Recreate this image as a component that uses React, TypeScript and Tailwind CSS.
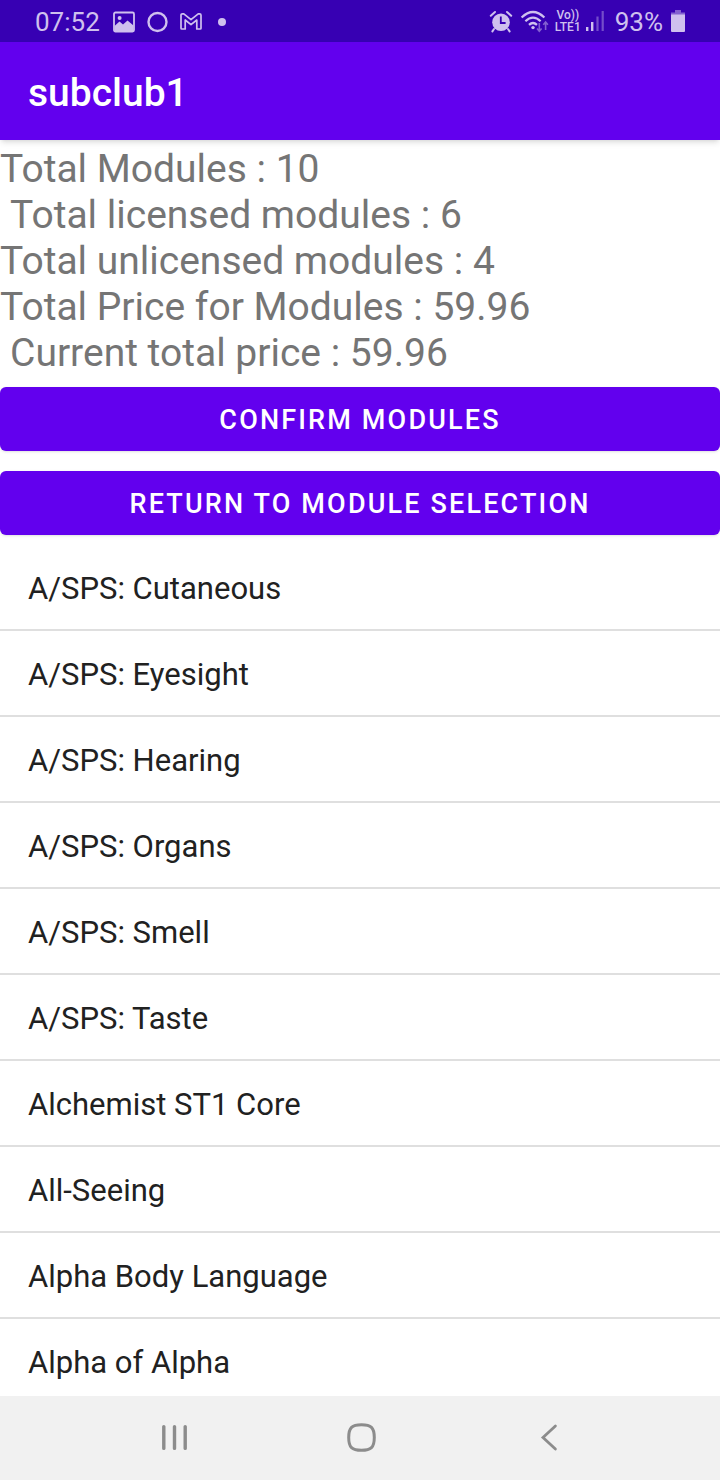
const TOTALS = [
  { label: "Total Modules", value: "10" },
  { label: "Total licensed modules", value: "6", indent: true },
  { label: "Total unlicensed modules", value: "4" },
  { label: "Total Price for Modules", value: "59.96" },
  { label: "Current total price", value: "59.96", indent: true },
];

const ACTIONS = ["Confirm Modules", "Return to Module Selection"];

const MODULES = [
  "A/SPS: Cutaneous",
  "A/SPS: Eyesight",
  "A/SPS: Hearing",
  "A/SPS: Organs",
  "A/SPS: Smell",
  "A/SPS: Taste",
  "Alchemist ST1 Core",
  "All-Seeing",
  "Alpha Body Language",
  "Alpha of Alpha",
];

function StatusBar() {
  return (
    <div className="flex h-[42px] shrink-0 items-center justify-between bg-[#3700b3] px-[35px] pt-0.5 text-[#cfc0ee]">
      <div className="flex items-center gap-3">
        <span className="text-[26px] leading-8">07:52</span>
        <svg className="ml-px" width="22" height="22" viewBox="0 0 22 22" aria-hidden="true">
          <rect x="1" y="1.5" width="20" height="19" rx="1.5" fill="none" stroke="currentColor" strokeWidth="1.8" />
          <circle cx="6.6" cy="7" r="2" fill="currentColor" />
          <path d="M1.5 15 6.5 10.5 10 13.5 14.5 9.5 20.5 14.5V20.5H1.5Z" fill="currentColor" />
        </svg>
        <svg width="21" height="22" viewBox="0 0 21 22" aria-hidden="true">
          <circle cx="10.5" cy="11" r="9" fill="none" stroke="currentColor" strokeWidth="2.4" />
        </svg>
        <svg width="22" height="22" viewBox="0 0 22 22" aria-hidden="true">
          <path
            d="M1 4.2Q1 2.8 2.4 2.8H3.8L11 8.6 18.2 2.8H19.6Q21 2.8 21 4.2V17.2Q21 18 20.2 18H16.8V9L11 13.6 5.2 9V18H1.8Q1 18 1 17.2Z"
            fill="none"
            stroke="currentColor"
            strokeWidth="1.7"
            strokeLinejoin="round"
          />
        </svg>
        <span className="ml-1 size-2 rounded-full bg-current" />
      </div>

      <div className="flex items-center gap-[5px]">
        <div className="flex items-center gap-[7px]">
          <svg width="24" height="24" viewBox="0 0 24 24" aria-hidden="true">
            <circle cx="12" cy="12.2" r="8.8" fill="currentColor" />
            <path d="M1.8 5.8 6 2M22.2 5.8 18 2M5 19 3.4 21.4M19 19 20.6 21.4" stroke="currentColor" strokeWidth="2" strokeLinecap="round" />
            <path d="M11.8 6.6V13H16.6" fill="none" stroke="#3700b3" strokeWidth="1.8" />
          </svg>
          <svg width="30" height="24" viewBox="0 0 30 24" aria-hidden="true">
            <g fill="none" stroke="currentColor" strokeWidth="2.2">
              <path d="M1.6 7.5Q13 -3.5 24.4 7.5" />
              <path d="M5.4 11.3Q13 3.9 20.6 11.3" />
              <path d="M9 14.9Q13 11.1 17 14.9" />
            </g>
            <circle cx="13" cy="17.6" r="1.7" fill="currentColor" />
            <path
              d="M19.3 13V21M17 18.5 19.3 21.2 21.6 18.5M25.6 20V12M23.3 14.7 25.6 12 27.9 14.7"
              fill="none"
              stroke="currentColor"
              strokeWidth="1.6"
              opacity=".5"
            />
          </svg>
        </div>
        <div className="flex flex-col items-center pb-0.5 text-xs leading-3 font-medium">
          <span>Vo))</span>
          <span>LTE1</span>
        </div>
        <svg width="18" height="22" viewBox="0 0 18 22" fill="currentColor" aria-hidden="true">
          <rect x="0" y="16" width="2.4" height="4" />
          <rect x="5" y="11" width="2.4" height="9" />
          <rect x="10.4" y="5.5" width="2.2" height="14.5" opacity=".4" />
          <rect x="15.6" y="0" width="2.2" height="20" opacity=".4" />
        </svg>
        <span className="ml-1.5 text-[26px] leading-8">93%</span>
        <svg className="ml-[3px]" width="14" height="24" viewBox="0 0 14 24" fill="currentColor" aria-hidden="true">
          <path d="M4 0H10V2.4H14V5H0V2.4H4Z" opacity=".5" />
          <path d="M0 4.5H14V21Q14 22 13 22H1Q0 22 0 21Z" />
        </svg>
      </div>
    </div>
  );
}

function NavigationBar() {
  return (
    <nav className="flex h-[84px] shrink-0 items-center justify-center gap-[156px] bg-[#f1f1f1] pl-0.5 text-[#8c8c8c]">
      <button type="button" aria-label="Recent apps">
        <svg width="32" height="32" viewBox="0 0 32 32" fill="none" stroke="currentColor" strokeWidth="3.4" strokeLinecap="round">
          <path d="M6.8 4.6V26.4M17.5 4.6V26.4M28.2 4.6V26.4" />
        </svg>
      </button>
      <button type="button" aria-label="Home">
        <svg width="32" height="32" viewBox="0 0 32 32" fill="none" stroke="currentColor" strokeWidth="3">
          <path d="M16.5 2.7C26 2.7 29.3 5.5 29.3 15.5S26 28.3 16.5 28.3 3.7 25.5 3.7 15.5 7 2.7 16.5 2.7Z" />
        </svg>
      </button>
      <button type="button" aria-label="Back">
        <svg width="32" height="32" viewBox="0 0 32 32" fill="none" stroke="currentColor" strokeWidth="2.8" strokeLinecap="round">
          <path d="M22.4 4 10 15.5 22.4 27" />
        </svg>
      </button>
    </nav>
  );
}

export default function App() {
  return (
    <div className="flex h-screen flex-col bg-white font-[Roboto,sans-serif]">
      <StatusBar />
      <header className="relative flex h-[98px] shrink-0 items-center bg-[#6200ee] px-7 pt-1 shadow-md shadow-black/10">
        <h1 className="text-[39px] leading-[46px] font-medium text-white">subclub1</h1>
      </header>

      <main className="flex min-h-0 flex-1 flex-col overflow-hidden">
        <section className="pt-1.5 text-[39px] leading-[46px] text-[#757575]">
          {TOTALS.map((row) => (
            <p key={row.label} className={row.indent ? "pl-2.5" : ""}>
              {row.label} : {row.value}
            </p>
          ))}
        </section>

        <div className="mt-[11px] flex flex-col gap-5">
          {ACTIONS.map((label) => (
            <button
              key={label}
              type="button"
              className="h-16 w-full rounded-md bg-[#6200ee] pt-0.5 text-[27px] leading-8 font-medium tracking-[0.08em] text-white uppercase shadow-sm"
            >
              {label}
            </button>
          ))}
        </div>

        <ul className="mt-2.5 divide-y-2 divide-[#dfdfdf] text-[31px] leading-9 text-[#212121]">
          {MODULES.map((name) => (
            <li key={name} className="px-7 pt-[26px] pb-[22px]">
              {name}
            </li>
          ))}
        </ul>
      </main>

      <NavigationBar />
    </div>
  );
}
